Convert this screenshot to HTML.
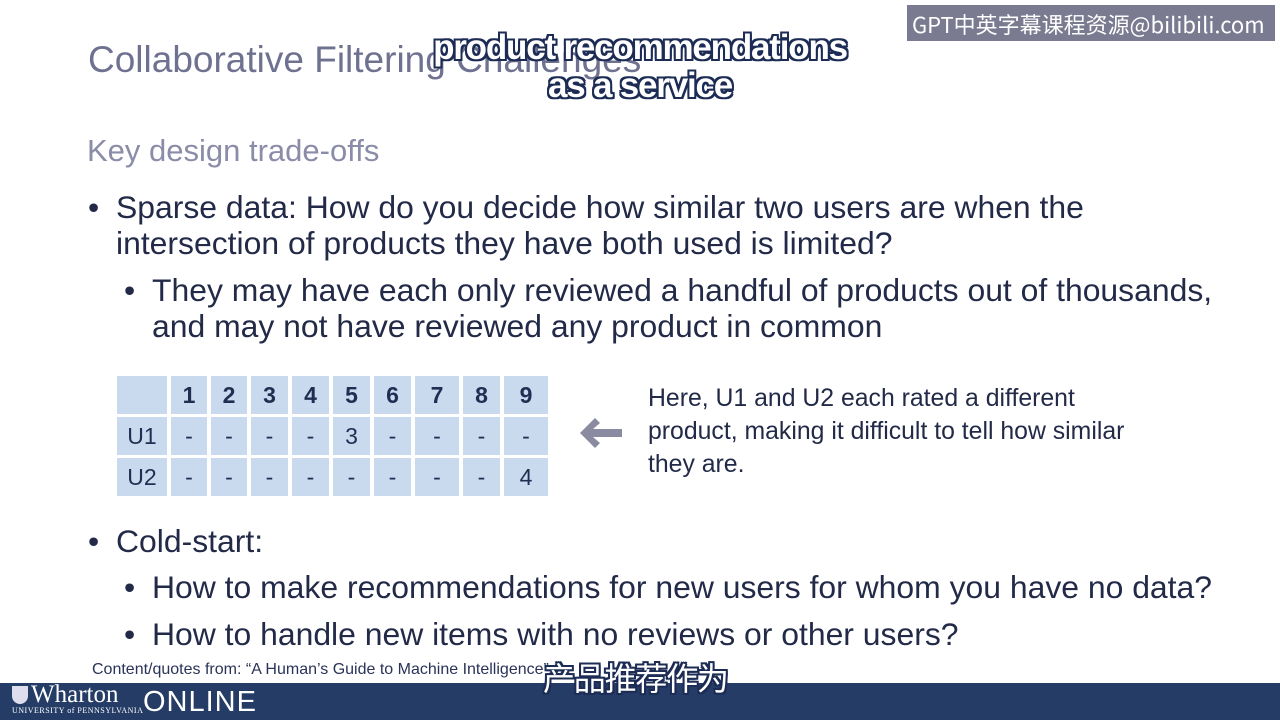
<!DOCTYPE html>
<html><head><meta charset="utf-8"><style>
body{margin:0;width:1280px;height:720px;background:#fff;position:relative;overflow:hidden;font-family:"Liberation Sans","Noto Sans CJK SC",sans-serif;}
.a{position:absolute;white-space:nowrap;}
.t{color:#222a48;font-size:31.9px;}
table{position:absolute;left:113px;top:373px;border-collapse:separate;border-spacing:4px 3px;}
td{background:#c9d9ee;height:38px;text-align:center;color:#1f2f52;font-size:23px;padding:0;}
tr:first-child td{font-weight:bold;}
.sub{color:#fff;font-weight:bold;font-size:35px;text-shadow:2px 0 #1c2c55,-2px 0 #1c2c55,0 2px #1c2c55,0 -2px #1c2c55,2px 2px #1c2c55,-2px -2px #1c2c55,2px -2px #1c2c55,-2px 2px #1c2c55;letter-spacing:-1.2px;}
</style></head><body>
<div class="a" style="left:88px;top:39px;font-size:37px;color:#6f7190;">Collaborative Filtering Challenges</div>
<div class="a" style="left:87px;top:133px;font-size:31px;color:#8a8ca8;">Key design trade-offs</div>
<div class="a t" style="left:88px;top:189px;">•</div>
<div class="a t" style="left:116px;top:189px;">Sparse data: How do you decide how similar two users are when the</div>
<div class="a t" style="left:116px;top:225px;">intersection of products they have both used is limited?</div>
<div class="a t" style="left:124px;top:272px;">•</div>
<div class="a t" style="left:152px;top:272px;">They may have each only reviewed a handful of products out of thousands,</div>
<div class="a t" style="left:152px;top:308px;">and may not have reviewed any product in common</div>
<table>
<tr><td style="width:50px"></td><td style="width:36px">1</td><td style="width:36px">2</td><td style="width:37px">3</td><td style="width:37px">4</td><td style="width:37px">5</td><td style="width:37px">6</td><td style="width:44px">7</td><td style="width:37px">8</td><td style="width:44px">9</td></tr>
<tr><td>U1</td><td>-</td><td>-</td><td>-</td><td>-</td><td>3</td><td>-</td><td>-</td><td>-</td><td>-</td></tr>
<tr><td>U2</td><td>-</td><td>-</td><td>-</td><td>-</td><td>-</td><td>-</td><td>-</td><td>-</td><td>4</td></tr>
</table>
<svg class="a" style="left:578px;top:416px" width="46" height="34" viewBox="0 0 46 34"><path d="M2 17 L17 2 L22 7 L15 13 L44 13 L44 21 L15 21 L22 27 L17 32 Z" fill="#8a8aa0"/></svg>
<div class="a" style="left:648px;top:382px;font-size:24.8px;color:#222a48;line-height:33px;">Here, U1 and U2 each rated a different<br>product, making it difficult to tell how similar<br>they are.</div>
<div class="a t" style="left:88px;top:523px;">•</div>
<div class="a t" style="left:116px;top:523px;">Cold-start:</div>
<div class="a t" style="left:124px;top:569px;">•</div>
<div class="a t" style="left:152px;top:569px;">How to make recommendations for new users for whom you have no data?</div>
<div class="a t" style="left:124px;top:616px;">•</div>
<div class="a t" style="left:152px;top:616px;">How to handle new items with no reviews or other users?</div>
<div class="a" style="left:92px;top:661px;font-size:16px;color:#2a3358;">Content/quotes from: “A Human’s Guide to Machine Intelligence”</div>
<div class="a" style="left:0;top:683px;width:1280px;height:37px;background:#243c66;"></div>
<div class="a" style="left:12px;top:686px;width:16px;height:18px;background:#dde;border-radius:0 0 8px 8px;"></div>
<div class="a" style="left:31px;top:681px;font-family:'Liberation Serif',serif;font-size:25px;color:#fff;">Wharton</div>
<div class="a" style="left:12px;top:706px;font-family:'Liberation Serif',serif;font-size:8px;color:#fff;letter-spacing:0.5px;">UNIVERSITY of PENNSYLVANIA</div>
<div class="a" style="left:143px;top:686px;font-size:29px;color:#fff;letter-spacing:1px;">ONLINE</div>
<div class="a sub" style="left:543px;top:654px;font-size:32px;font-weight:normal;">产品推荐作为</div>
<div class="a sub" style="left:340px;top:28px;width:600px;text-align:center;">product recommendations</div>
<div class="a sub" style="left:340px;top:66px;width:600px;text-align:center;">as a service</div>
<div class="a" style="left:907px;top:5px;width:368px;height:36px;background:#7a7a90;"></div>
<div class="a" style="left:912px;top:8px;font-size:22px;color:#fff;font-family:'WenQuanYi Zen Hei','Noto Sans CJK SC',sans-serif;">GPT中英字幕课程资源@bilibili.com</div>
</body></html>
